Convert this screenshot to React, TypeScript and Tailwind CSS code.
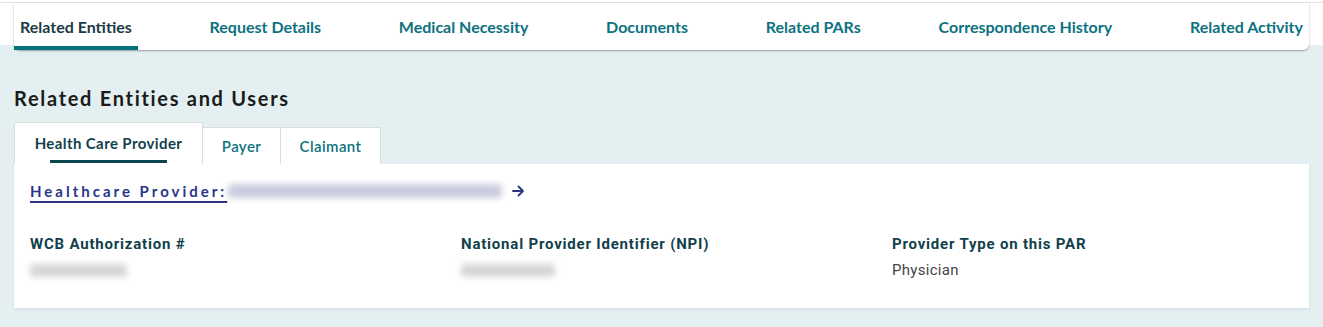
import React from 'react';

const tabs = [
  'Related Entities',
  'Request Details',
  'Medical Necessity',
  'Documents',
  'Related PARs',
  'Correspondence History',
  'Related Activity',
];

export default function App() {
  return (
    <div className="relative h-[327px] w-[1323px] overflow-hidden bg-[#e4eff1] font-['Lato',sans-serif]">
      {/* top strip */}
      <div className="absolute inset-x-0 top-0 h-[45px] border-t-[2px] border-t-white bg-white">
        <div className="h-[1px] w-full bg-[#e3e3e3]" />
      </div>

      <div className="relative px-[14px] pt-[3px]">
        {/* main tab bar */}
        <nav className="flex h-[47px] items-stretch justify-between rounded-b-[6px] bg-white shadow-[0_1px_2px_rgba(0,0,0,0.35)]">
          {tabs.map((t, i) => (
            <div
              key={t}
              className={`flex items-center border-b-[4px] px-[6px] pt-[5px] text-[16px] font-bold ${
                i === 0 ? 'border-[#00737c] text-[#1b3a45]' : 'border-transparent text-[#0d7280]'
              }`}
            >
              {t}
            </div>
          ))}
        </nav>

        <h2 className="mt-[36px] text-[20px] font-bold leading-[24px] tracking-[1.7px] text-[#1b1b1b]">
          Related Entities and Users
        </h2>

        {/* sub tabs */}
        <div className="mt-[12px] flex items-end">
          <div className="flex h-[42px] w-[189px] flex-col items-center justify-between rounded-tl-[3px] border border-b-0 border-[#dcdcdc] bg-white pt-[9px]">
            <span className="text-[15px] font-bold tracking-[0.4px] text-[#123f4c]">Health Care Provider</span>
            <div className="mb-[1px] h-[3px] w-[117px] bg-[#0b4650]" />
          </div>
          <div className="flex h-[37px] w-[78px] items-center justify-center border border-b-0 border-l-0 border-[#dcdcdc] bg-white text-[15px] font-semibold tracking-[0.4px] text-[#0d7280]">
            Payer
          </div>
          <div className="flex h-[37px] w-[100px] items-center justify-center border border-b-0 border-l-0 border-[#dcdcdc] bg-white text-[15px] font-semibold tracking-[0.4px] text-[#0d7280]">
            Claimant
          </div>
        </div>

        {/* card */}
        <div className="h-[144px] bg-white px-[16px] pt-[17px] shadow-[0_1px_3px_rgba(0,0,0,0.08)]">
          <div className="flex h-[20px] items-center">
            <span className="text-[15px] font-bold tracking-[3px] text-[#2a3588] underline decoration-[1.5px] underline-offset-[4px]">
              Healthcare Provider:
            </span>
            <span className="ml-[1px] h-[14px] w-[274px] rounded-[4px] bg-[#c9cbe0] blur-[3px]" />
            <svg className="ml-[10px]" width="12" height="12" viewBox="0 0 12 12" fill="none" stroke="#2a3588" strokeWidth="1.8" strokeLinecap="round" strokeLinejoin="round">
              <path d="M1 6h10M6.5 1.5 11 6l-4.5 4.5" />
            </svg>
          </div>

          <div className="mt-[32px] grid grid-cols-[431px_431px_1fr] font-['Roboto',sans-serif]">
            <div>
              <div className="text-[15px] font-bold tracking-[0.8px] text-[#123f4c]">WCB Authorization #</div>
              <div className="mt-[8px] h-[13px] w-[97px] rounded-[3px] bg-[#d6d6d6] blur-[3px]" />
            </div>
            <div>
              <div className="text-[15px] font-bold tracking-[0.8px] text-[#123f4c]">National Provider Identifier (NPI)</div>
              <div className="mt-[8px] h-[13px] w-[94px] rounded-[3px] bg-[#d6d6d6] blur-[3px]" />
            </div>
            <div>
              <div className="text-[15px] font-bold tracking-[0.8px] text-[#123f4c]">Provider Type on this PAR</div>
              <div className="mt-[3px] text-[15px] tracking-[0.3px] text-[#444]">Physician</div>
            </div>
          </div>
        </div>
      </div>
    </div>
  );
}
